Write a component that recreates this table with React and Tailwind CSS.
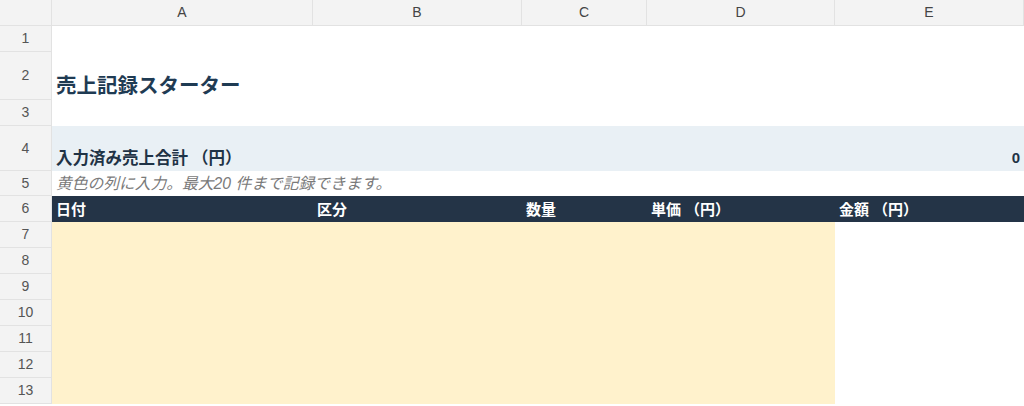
import React from 'react';

const cols = [
  { key: 'A', w: 'w-[261px]' },
  { key: 'B', w: 'w-[209px]' },
  { key: 'C', w: 'w-[125px]' },
  { key: 'D', w: 'w-[188px]' },
  { key: 'E', w: 'flex-1' },
];

function Yen() {
  return <span className="ml-[4px] mr-[2px]">（円）</span>;
}

const headers = [<>日付</>, <>区分</>, <>数量</>, <>単価<Yen /></>, <>金額<Yen /></>];

function RowHead({ n, h }) {
  return (
    <div className={`w-[52px] shrink-0 ${h} bg-[#f3f3f3] border-r border-b border-[#e2e2e2] flex items-center justify-center text-[14px] text-[#555]`}>
      {n}
    </div>
  );
}

export default function App() {
  const font = { fontFamily: '"Liberation Sans", "Noto Sans CJK JP", sans-serif' };

  return (
    <div className="w-[1024px] h-[406px] overflow-hidden bg-white" style={font}>
      {/* column letters */}
      <div className="flex h-[26px]">
        <div className="w-[52px] shrink-0 bg-[#f3f3f3] border-r border-b border-[#e2e2e2]"></div>
        {cols.map(c => (
          <div key={c.key} className={`${c.w} shrink-0 bg-[#f3f3f3] border-r border-b border-[#e2e2e2] flex items-center justify-center text-[14px] text-[#444]`}>
            {c.key}
          </div>
        ))}
      </div>

      {/* row 1 */}
      <div className="flex h-[26px]">
        <RowHead n={1} h="h-[26px]" />
        <div className="flex-1"></div>
      </div>

      {/* row 2: title */}
      <div className="flex h-[48px]">
        <RowHead n={2} h="h-[48px]" />
        <div className="flex-1 flex items-end pl-[4px] pb-0">
          <span className="text-[20.5px] font-bold text-[#1f3b53] leading-[28px]">売上記録スターター</span>
        </div>
      </div>

      {/* row 3 */}
      <div className="flex h-[26px]">
        <RowHead n={3} h="h-[26px]" />
        <div className="flex-1"></div>
      </div>

      {/* row 4: total */}
      <div className="flex h-[45px]">
        <RowHead n={4} h="h-[45px]" />
        <div className="flex-1 bg-[#e9f0f5] flex items-end justify-between px-[4px] pb-[2px] text-[16.5px] font-bold text-[#1f3346] leading-[22px]">
          <span>入力済み売上合計<Yen /></span>
          <span className="text-[15px]">0</span>
        </div>
      </div>

      {/* row 5: note */}
      <div className="flex h-[25px]">
        <RowHead n={5} h="h-[25px]" />
        <div className="flex-1 flex items-end pl-[4px] pb-[1px] text-[15.75px] italic text-[#7a7a7a] leading-[22px]">
          黄色の列に入力。最大20 件まで記録できます。
        </div>
      </div>

      {/* row 6: table header */}
      <div className="flex h-[26px]">
        <RowHead n={6} h="h-[26px]" />
        {cols.map((c, i) => (
          <div key={c.key} className={`${c.w} shrink-0 bg-[#243447] flex items-end pl-[4px] pb-[1px] text-[15px] font-bold text-white leading-[22px]`}>
            <span>{headers[i]}</span>
          </div>
        ))}
      </div>

      {/* rows 7-13 */}
      {[7, 8, 9, 10, 11, 12, 13].map(n => (
        <div key={n} className="flex h-[26px]">
          <RowHead n={n} h="h-[26px]" />
          <div className="w-[783px] shrink-0 bg-[#fff2cc]"></div>
          <div className="flex-1 bg-white"></div>
        </div>
      ))}
    </div>
  );
}
